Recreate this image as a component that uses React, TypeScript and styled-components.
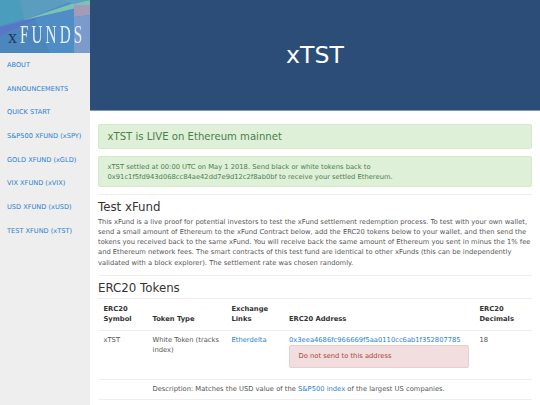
import styled, { createGlobalStyle } from "styled-components";

const GlobalStyle = createGlobalStyle`
    html, body {
        margin: 0;
        height: 100%;
        overflow: hidden;
        background: #fff;
        font-family: "DejaVu Sans", sans-serif;
    }
`;

const Page = styled.div`
    display: grid;
    grid-template-columns: 90px 1fr;
    width: 540px;
    height: 405px;
    overflow: hidden;
`;

const Sidebar = styled.aside`
    background: #eeeeee;
    display: flex;
    flex-direction: column;
`;

const Logo = styled.div`
    position: relative;
    height: 53px;
    overflow: hidden;
`;

const LogoArt = styled.svg`
    display: block;
    width: 90px;
    height: 53px;
    filter: blur(0.5px);
`;

const LogoText = styled.div`
    position: absolute;
    left: 8px;
    top: 22.5px;
    display: flex;
    align-items: baseline;
    font-family: "Liberation Serif", serif;
    line-height: 24.5px;
    white-space: nowrap;
`;

const LogoX = styled.span`
    width: 12px;
    color: #24365e;
    font-size: 18px;
`;

const LogoFunds = styled.span`
    display: inline-block;
    color: #e8eef5;
    font-size: 24.5px;
    letter-spacing: 5px;
    transform: scaleX(0.62);
    transform-origin: left center;
`;

const Nav = styled.nav`
    display: flex;
    flex-direction: column;
`;

const NavLink = styled.a`
    display: flex;
    align-items: center;
    height: 23.7px;
    padding-left: 7px;
    font-size: 6.6px;
    color: #2a80d0;
    white-space: nowrap;
`;

const Main = styled.main`
    display: flex;
    flex-direction: column;
    min-width: 0;
`;

const Header = styled.header`
    height: 111px;
    flex: none;
    background: #2b4d77;
    border-bottom: 1px solid #8097b2;
    box-sizing: border-box;
    display: flex;
    align-items: center;
    justify-content: center;
`;

const Title = styled.h1`
    margin: 0;
    font-weight: 400;
    font-size: 23.6px;
    color: #fff;
`;

const Content = styled.div`
    padding: 13px 8px 0;
`;

const Alert = styled.div<{ $large?: boolean }>`
    background: #dff0d8;
    border: 1px solid #d6e9c6;
    border-radius: 2px;
    color: #4a7f4b;
    padding: 4.5px 8.5px;
    margin-bottom: 7px;
    font-size: ${(p) => (p.$large ? "10.1px" : "6.75px")};
    line-height: ${(p) => (p.$large ? "14px" : "10.1px")};
`;

const Rule = styled.hr`
    border: 0;
    border-top: 1px solid #eeeeee;
    margin: 0;
`;

const Heading = styled.h2`
    margin: 4.5px 0 2.5px;
    font-weight: 400;
    font-size: 11.8px;
    line-height: 15px;
    color: #333;
`;

const Paragraph = styled.p`
    margin: 0 0 7.5px;
    font-size: 6.75px;
    line-height: 10.1px;
    color: #555;
`;

const Table = styled.table`
    width: 434px;
    table-layout: fixed;
    border-collapse: collapse;
    font-size: 6.75px;
    line-height: 10.1px;
    color: #555;
`;

const Th = styled.th`
    text-align: left;
    vertical-align: bottom;
    font-weight: 700;
    padding: 5px 5.5px 5.5px;
    border-top: 1px solid #eeeeee;
    border-bottom: 1px solid #eeeeee;
    color: #333;
`;

const Td = styled.td`
    vertical-align: top;
    padding: 4.5px 5.5px;
    border-bottom: 1px solid #eeeeee;
`;

const Link = styled.a`
    color: #2a80d0;
`;

const Danger = styled.div`
    background: #f2dede;
    border: 1px solid #ebccd1;
    border-radius: 2px;
    color: #a94442;
    padding: 5px 8.5px;
    line-height: 10.1px;
    margin-bottom: 6.5px;
`;

const navItems = [
    "ABOUT",
    "ANNOUNCEMENTS",
    "QUICK START",
    "S&P500 XFUND (xSPY)",
    "GOLD XFUND (xGLD)",
    "VIX XFUND (xVIX)",
    "USD XFUND (xUSD)",
    "TEST XFUND (xTST)",
];

const columnWidths = [49, 79, 57.5, 190.5, 58];

function App() {
    return (
        <>
            <GlobalStyle />
            <Page>
                <Sidebar>
                    <Logo>
                        <LogoArt viewBox="0 0 90 53" preserveAspectRatio="none">
                            <rect width="90" height="53" fill="#4f8dc6" />
                            <polygon points="0,0 62,0 26,18 0,26" fill="#4a9dbd" />
                            <polygon points="20,0 75,0 24,20" fill="#5b9dbf" />
                            <polygon points="24,20 74,3 90,0 90,5" fill="#7cc3b2" />
                            <polygon points="62,0 90,0 74,4" fill="#5fa0c4" />
                            <polygon points="0,27 40,17 0,36" fill="#5a74c6" />
                            <polygon points="74,5 90,5 90,15 74,17" fill="#a39bb8" />
                            <polygon points="74,17 90,15 90,53 74,53" fill="#7b9bcc" />
                            <polygon points="0,36 35,20 50,53 0,53" fill="#4b86bd" />
                        </LogoArt>
                        <LogoText>
                            <LogoX>x</LogoX>
                            <LogoFunds>FUNDS</LogoFunds>
                        </LogoText>
                    </Logo>
                    <Nav>
                        {navItems.map((item) => (
                            <NavLink key={item}>{item}</NavLink>
                        ))}
                    </Nav>
                </Sidebar>
                <Main>
                    <Header>
                        <Title>xTST</Title>
                    </Header>
                    <Content>
                        <Alert $large>xTST is LIVE on Ethereum mainnet</Alert>
                        <Alert>
                            xTST settled at 00:00 UTC on May 1 2018. Send black or white tokens back to
                            <br />
                            0x91c1f5fd943d068cc84ae42dd7e9d12c2f8ab0bf to receive your settled Ethereum.
                        </Alert>
                        <Rule />
                        <Heading>Test xFund</Heading>
                        <Paragraph>
                            This xFund is a live proof for potential investors to test the xFund settlement redemption process. To test with your own wallet, send a small amount of Ethereum to the xFund Contract below, add the ERC20 tokens below to your wallet, and then send the tokens you received back to the same xFund. You will receive back the same amount of Ethereum you sent in minus the 1% fee and Ethereum network fees. The smart contracts of this test fund are identical to other xFunds (this can be independently validated with a block explorer). The settlement rate was chosen randomly.
                        </Paragraph>
                        <Rule />
                        <Heading>ERC20 Tokens</Heading>
                        <Table>
                            <colgroup>
                                {columnWidths.map((width, index) => (
                                    <col key={index} width={width} />
                                ))}
                            </colgroup>
                            <thead>
                                <tr>
                                    <Th>ERC20 Symbol</Th>
                                    <Th>Token Type</Th>
                                    <Th>Exchange Links</Th>
                                    <Th>ERC20 Address</Th>
                                    <Th>ERC20 Decimals</Th>
                                </tr>
                            </thead>
                            <tbody>
                                <tr>
                                    <Td>xTST</Td>
                                    <Td>White Token (tracks index)</Td>
                                    <Td><Link>Etherdelta</Link></Td>
                                    <Td>
                                        <Link>0x3eea4686fc966669f5aa0110cc6ab1f352807785</Link>
                                        <Danger>Do not send to this address</Danger>
                                    </Td>
                                    <Td>18</Td>
                                </tr>
                                <tr>
                                    <Td />
                                    <Td colSpan={4}>
                                        Description: Matches the USD value of the <Link>S&amp;P500 index</Link> of the largest US companies.
                                    </Td>
                                </tr>
                            </tbody>
                        </Table>
                    </Content>
                </Main>
            </Page>
        </>
    );
}

export default App;
